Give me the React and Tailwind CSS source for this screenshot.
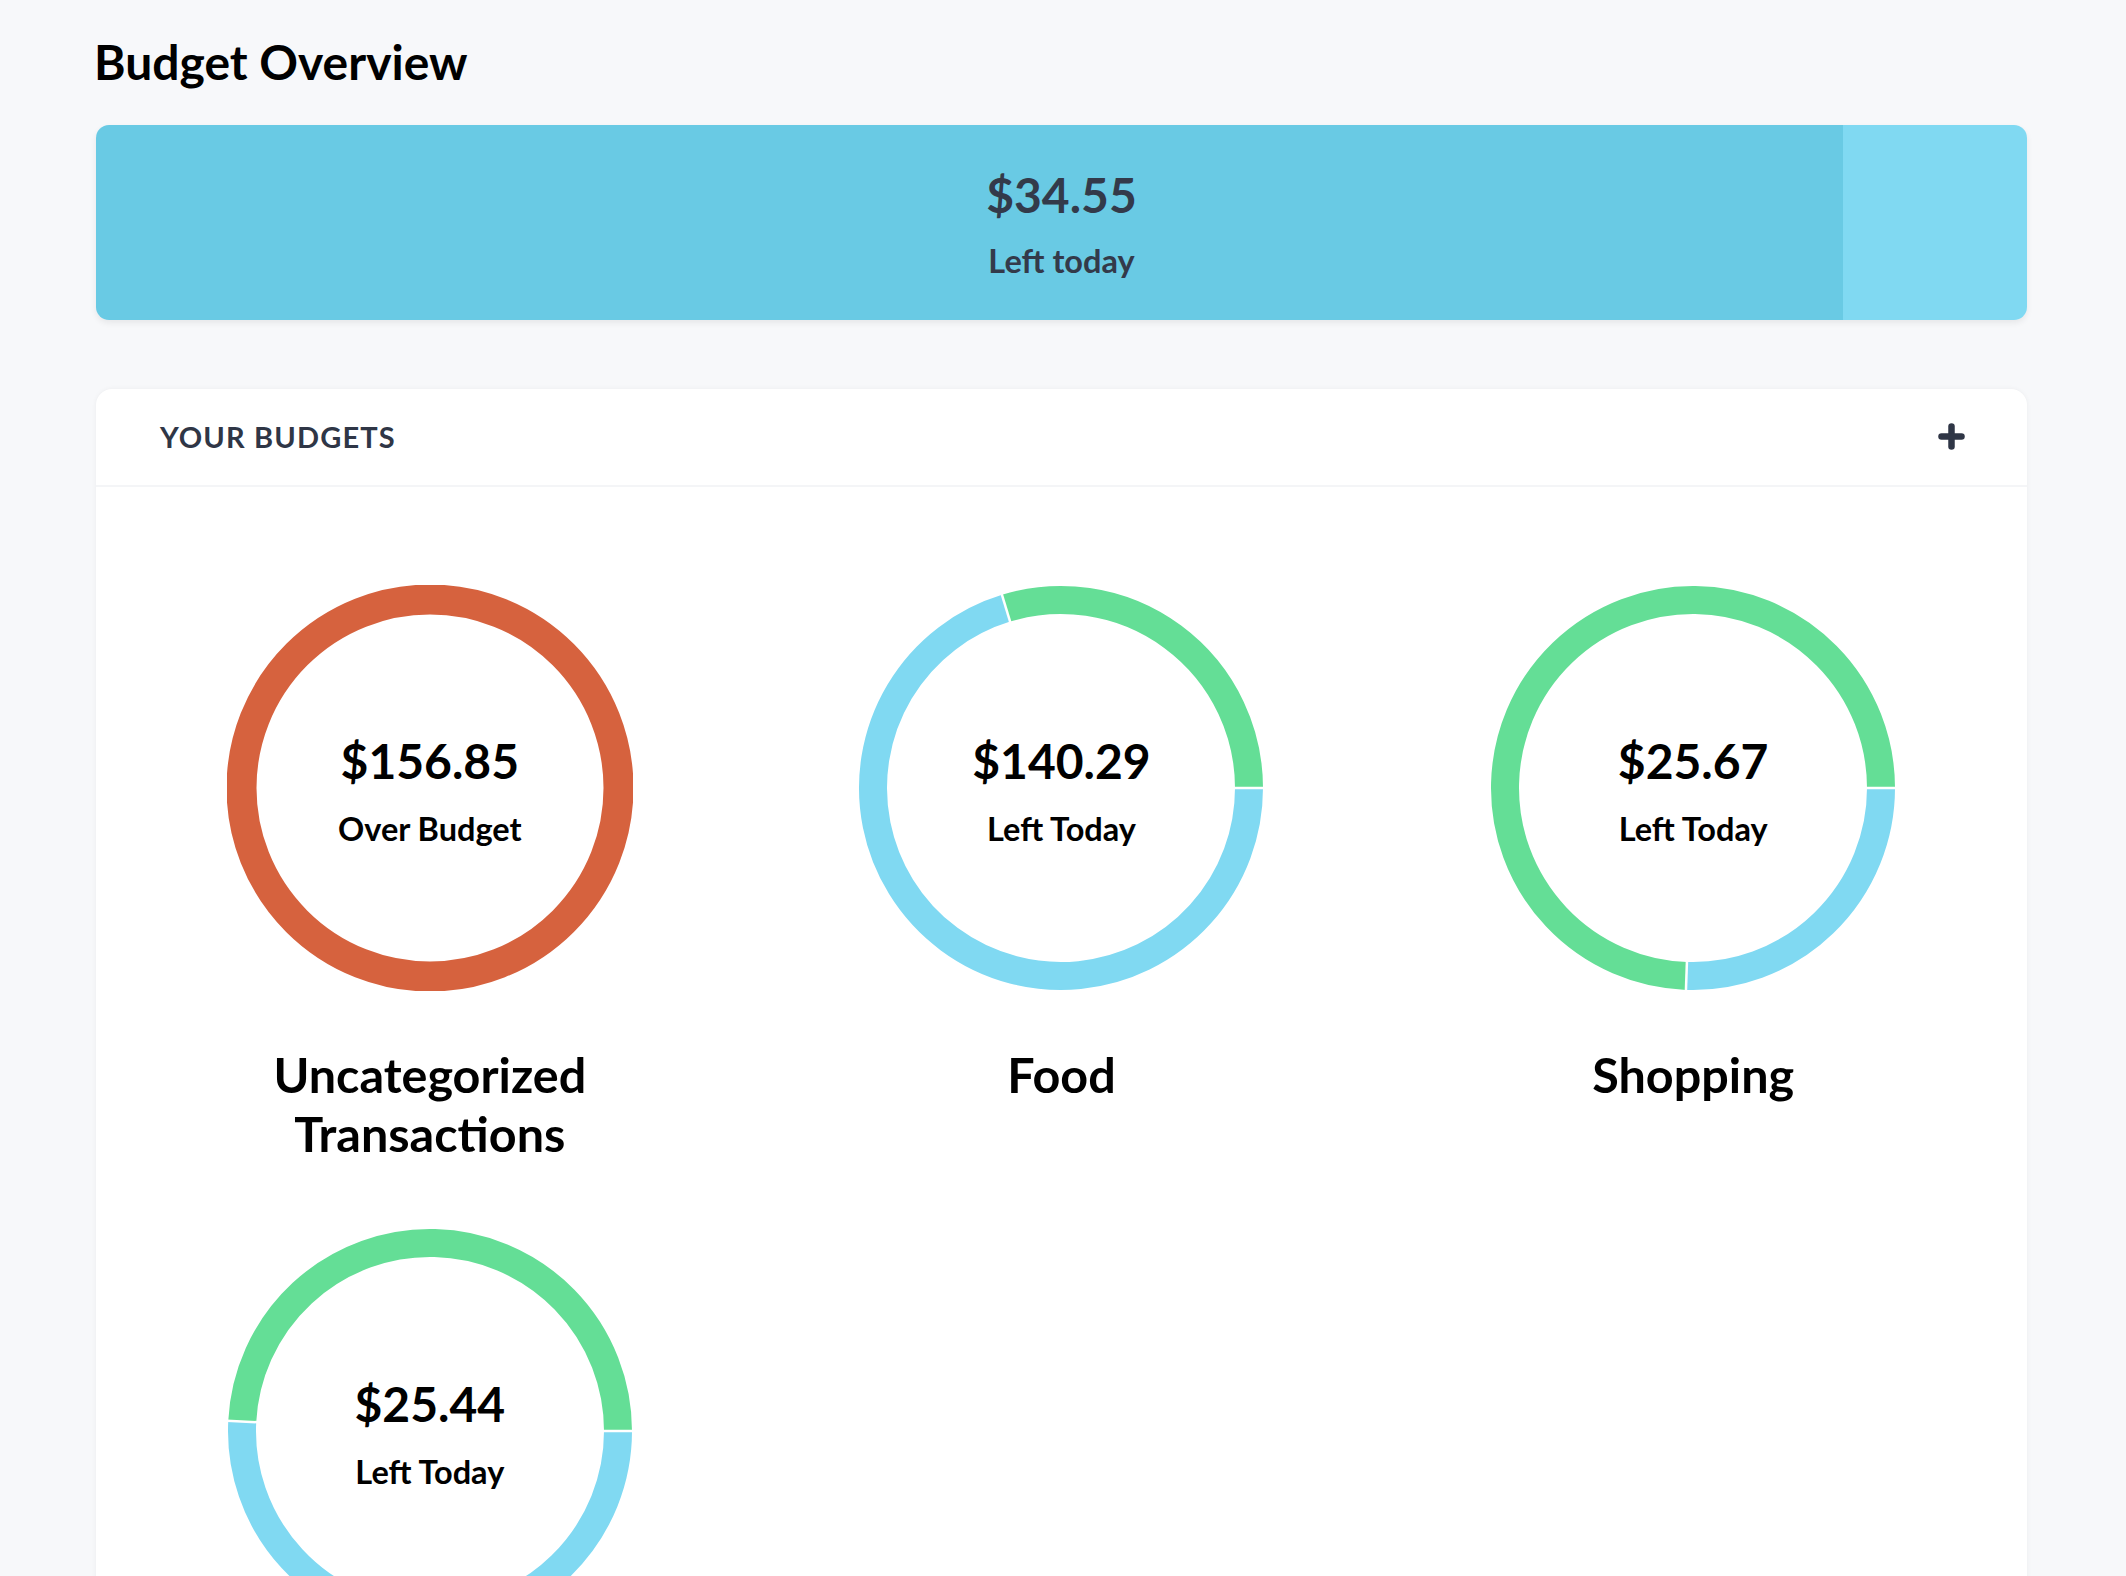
import React from 'react';

const BLUE = '#80d9f2';
const GREEN = '#64de96';
const RED = '#d6623e';

const budgets = [
  { id: 1, name: 'Uncategorized Transactions', amount: '$156.85', label: 'Over Budget', over: true },
  { id: 2, name: 'Food', amount: '$140.29', label: 'Left Today', split: 343 },
  { id: 3, name: 'Shopping', amount: '$25.67', label: 'Left Today', split: 182 },
  { id: 4, name: 'Savings', amount: '$25.44', label: 'Left Today', split: 272.9 },
];

// angle in degrees, measured clockwise from 12 o'clock
const point = (cx, cy, r, a) => {
  const rad = (a * Math.PI) / 180;
  return [cx + r * Math.sin(rad), cy - r * Math.cos(rad)];
};

const arc = (cx, cy, r, a0, a1) => {
  const [x0, y0] = point(cx, cy, r, a0);
  const [x1, y1] = point(cx, cy, r, a1);
  const large = a1 - a0 > 180 ? 1 : 0;
  return `M ${x0} ${y0} A ${r} ${r} 0 ${large} 1 ${x1} ${y1}`;
};

const Ring = ({ budget }) => {
  const c = 203;
  if (budget.over) {
    return (
      <svg width="406" height="406" viewBox="0 0 406 406" className="block">
        <circle cx={c} cy={c} r="188.5" fill="none" stroke={RED} strokeWidth="30" />
      </svg>
    );
  }
  const r = 188;
  const gaps = [90, budget.split];
  return (
    <svg width="406" height="406" viewBox="0 0 406 406" className="block">
      <path d={arc(c, c, r, 90, budget.split)} fill="none" stroke={BLUE} strokeWidth="28" />
      <path d={arc(c, c, r, budget.split, 450)} fill="none" stroke={GREEN} strokeWidth="28" />
      {gaps.map((a) => {
        const [x0, y0] = point(c, c, r - 16, a);
        const [x1, y1] = point(c, c, r + 16, a);
        return <line key={a} x1={x0} y1={y0} x2={x1} y2={y1} stroke="#ffffff" strokeWidth="2.5" />;
      })}
    </svg>
  );
};

const BudgetItem = ({ budget }) => (
  <div className="flex flex-col items-center">
    <div className="relative">
      <Ring budget={budget} />
      <div className="absolute inset-0 flex flex-col items-center justify-center pt-[5px] text-black">
        <span className="text-[48px] font-bold leading-[1.2]">{budget.amount}</span>
        <span className="mt-[20px] text-[32.5px] font-bold leading-[1.2]">{budget.label}</span>
      </div>
    </div>
    <h3 className="mt-[54px] max-w-[420px] text-center text-[48.5px] font-bold leading-[59px] text-black">
      {budget.name}
    </h3>
  </div>
);

export default function App() {
  return (
    <div className="min-h-screen bg-[#f7f8fa] pl-[96px] pr-[99px] pt-[33px] font-['Lato',sans-serif] text-[#2f3646]">
      <h1 className="ml-[-2px] text-[48px] font-bold leading-[1.2] text-black">Budget Overview</h1>

      <div className="relative mt-[34px] flex h-[195px] overflow-hidden rounded-[13px] shadow-[0_3px_6px_rgba(0,0,0,0.07)]">
        <div className="flex-1 bg-[#69cae4]" />
        <div className="w-[184px] bg-[#80d9f2]" />
        <div className="absolute inset-0 flex flex-col items-center justify-center pt-[2px] text-[#333a4a]">
          <span className="text-[48px] font-bold leading-[1.2]">$34.55</span>
          <span className="mt-[17px] text-[32.5px] font-bold leading-[1.2]">Left today</span>
        </div>
      </div>

      <div className="mt-[69px] rounded-[16px] bg-white shadow-[0_0_5px_rgba(0,0,0,0.05)]">
        <div className="flex h-[98px] items-center justify-between border-b-2 border-[#f4f5f7] px-16">
          <span className="text-[29px] font-bold uppercase tracking-[0.04em] text-[#2f3646]">Your Budgets</span>
          <svg width="27" height="27" viewBox="0 0 27 27" className="mr-[-2px]">
            <line x1="13.5" y1="3.5" x2="13.5" y2="23.5" stroke="#2f3646" strokeWidth="6.5" strokeLinecap="round" />
            <line x1="3.5" y1="13.5" x2="23.5" y2="13.5" stroke="#2f3646" strokeWidth="6.5" strokeLinecap="round" />
          </svg>
        </div>
        <div className="grid grid-cols-3 gap-y-[65px] px-[18px] pt-[98px] pb-[80px]">
          {budgets.map((b) => (
            <BudgetItem key={b.id} budget={b} />
          ))}
        </div>
      </div>
    </div>
  );
}
